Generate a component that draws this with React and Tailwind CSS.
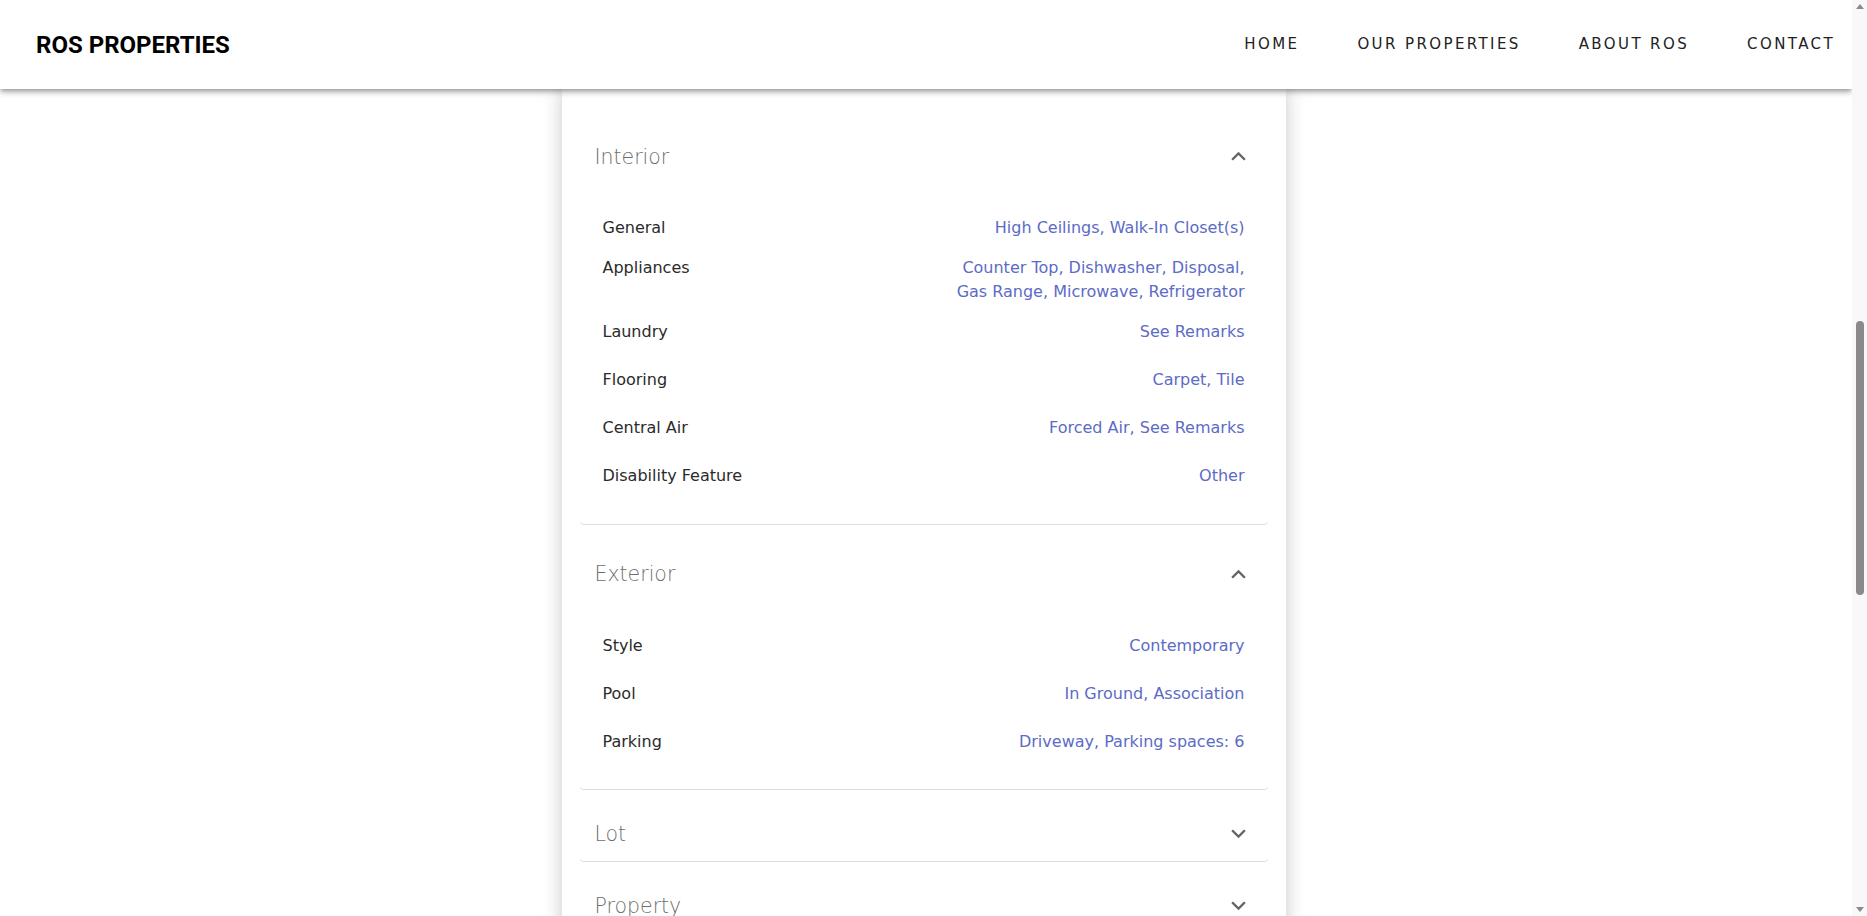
import React from "react";

const sans = "font-['DejaVu_Sans',sans-serif]";

function Chevron({ up }) {
  return (
    <svg
      viewBox="0 0 24 24"
      className={"h-[29px] w-[29px] fill-[#646464] " + (up ? "rotate-180" : "")}
      aria-hidden="true"
    >
      <path d="M16.59 8.59 12 13.17 7.41 8.59 6 10l6 6 6-6z" />
    </svg>
  );
}

function Row({ label, value, mt }) {
  return (
    <div className={"flex items-start justify-between pl-[23px] pr-[23px] text-[16px] leading-6 " + mt}>
      <span className="text-[#2b2b2b]">{label}</span>
      <span className="text-right text-[#5c6bc6]">{value}</span>
    </div>
  );
}

function Heading({ title, up }) {
  return (
    <div className="flex items-center justify-between pl-[15px] pr-[15px]">
      <span className="text-[20.5px] leading-7 font-light text-[#6e6e6e]">{title}</span>
      <Chevron up={up} />
    </div>
  );
}

export default function App() {
  return (
    <div className={"flex h-screen w-full overflow-hidden bg-white " + sans}>
      <div className="relative h-full w-[1852px] shrink-0 overflow-hidden">
        <header className="absolute inset-x-0 top-0 z-10 flex h-[89px] items-center justify-between bg-white pl-[36px] pr-[17px] shadow-[0_2px_4px_-1px_rgba(0,0,0,0.25),0_4px_5px_0_rgba(0,0,0,0.16),0_1px_10px_0_rgba(0,0,0,0.12)]">
          <div className="font-['Roboto',sans-serif] text-[24px] font-bold leading-none text-black">
            ROS PROPERTIES
          </div>
          <nav className="flex items-center gap-[58px] text-[15px] tracking-[2.4px] text-[#222]">
            <span>HOME</span>
            <span>OUR PROPERTIES</span>
            <span>ABOUT ROS</span>
            <span>CONTACT</span>
          </nav>
        </header>

        <main className="pr-[5px] pt-[89px]">
          <div className="mx-auto h-[1400px] w-[724px] bg-white px-[18px] pt-[35px] shadow-[0_0_18px_rgba(0,0,0,0.22)]">
            {/* Interior */}
            <section className="rounded-b-[4px] bg-white pb-[36px] shadow-[0_1px_0_rgba(0,0,0,0.13)]">
              <div className="flex h-[64px] items-center pt-[1px]">
                <div className="w-full">
                  <Heading title="Interior" up />
                </div>
              </div>
              <div className="pt-[28px]">
                <Row label="General" value="High Ceilings, Walk-In Closet(s)" mt="" />
                <Row
                  label="Appliances"
                  value={
                    <>
                      Counter Top, Dishwasher, Disposal,
                      <br />
                      Gas Range, Microwave, Refrigerator
                    </>
                  }
                  mt="mt-[16px]"
                />
                <Row label="Laundry" value="See Remarks" mt="mt-[16px]" />
                <Row label="Flooring" value="Carpet, Tile" mt="mt-[24px]" />
                <Row label="Central Air" value="Forced Air, See Remarks" mt="mt-[24px]" />
                <Row label="Disability Feature" value="Other" mt="mt-[24px]" />
              </div>
            </section>

            {/* Exterior */}
            <section className="mt-px rounded-b-[4px] bg-white pb-[35px] pt-[17px] shadow-[0_1px_0_rgba(0,0,0,0.13)]">
              <div className="flex h-[64px] items-center">
                <div className="w-full">
                  <Heading title="Exterior" up />
                </div>
              </div>
              <div className="pt-[28px]">
                <Row label="Style" value="Contemporary" mt="" />
                <Row label="Pool" value="In Ground, Association" mt="mt-[24px]" />
                <Row label="Parking" value="Driveway, Parking spaces: 6" mt="mt-[24px]" />
              </div>
            </section>

            {/* Lot */}
            <section className="mt-px rounded-b-[4px] bg-white pb-[13px] pt-[29px] shadow-[0_1px_0_rgba(0,0,0,0.13)]">
              <Heading title="Lot" />
            </section>

            {/* Property */}
            <section className="mt-px rounded-b-[4px] bg-white pb-[12px] pt-[29px] shadow-[0_1px_0_rgba(0,0,0,0.13)]">
              <Heading title="Property" />
            </section>
          </div>
        </main>
      </div>

      {/* scrollbar */}
      <div className="flex h-full w-[15px] shrink-0 flex-col items-center bg-[#f8f8f8]">
        <div className="mt-[4px] h-0 w-0 border-x-[4px] border-b-[5px] border-x-transparent border-b-[#8a8a8a]" />
        <div className="mt-[312px] h-[274px] w-[8px] rounded-full bg-[#8a8a8a]" />
        <div className="mt-auto mb-[4px] h-0 w-0 border-x-[4px] border-t-[5px] border-x-transparent border-t-[#8a8a8a]" />
      </div>
    </div>
  );
}
